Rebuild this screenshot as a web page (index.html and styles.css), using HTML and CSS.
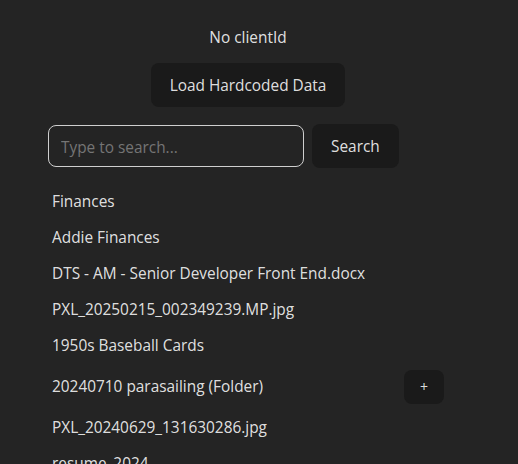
FILE: index.html
```html
<!DOCTYPE html>
<html lang="en">
<head>
<meta charset="utf-8">
<title>Files</title>
<link rel="stylesheet" href="styles.css">
</head>
<body>
<div class="app">
  <p class="status">No clientId</p>
  <div class="load-wrap"><button class="btn">Load Hardcoded Data</button></div>
  <div class="search-row">
    <input class="search-input" type="text" placeholder="Type to search...">
    <button class="btn">Search</button>
  </div>
  <ul class="file-list">
    <li class="file-row"><span>Finances</span></li>
    <li class="file-row"><span>Addie Finances</span></li>
    <li class="file-row"><span>DTS - AM - Senior Developer Front End.docx</span></li>
    <li class="file-row"><span>PXL_20250215_002349239.MP.jpg</span></li>
    <li class="file-row"><span>1950s Baseball Cards</span></li>
    <li class="file-row"><span>20240710 parasailing (Folder)</span><button class="btn btn-small">+</button></li>
    <li class="file-row"><span>PXL_20240629_131630286.jpg</span></li>
    <li class="file-row"><span>resume_2024</span></li>
  </ul>
</div>
</body>
</html>
```

FILE: styles.css
```css
html, body {
  margin: 0;
  background: #242424;
  color: rgba(255, 255, 255, 0.87);
  font-family: "Open Sans", "Noto Sans", sans-serif;
  font-size: 15.4px;
  line-height: 24px;
  overflow: hidden;
}

.app {
  width: 400px;
  margin-left: 48px;
  padding-top: 25px;
}

.status {
  margin: 0 0 14px;
  padding-top: 1px;
  height: 23px;
  text-align: center;
}

.load-wrap {
  display: flex;
  justify-content: center;
}

.btn {
  font-family: inherit;
  font-size: 15.4px;
  line-height: 24px;
  font-weight: 500;
  color: rgba(255, 255, 255, 0.87);
  background: #1a1a1a;
  border: 1px solid transparent;
  border-radius: 8px;
  padding: 10px 18px 8px;
  cursor: pointer;
}

.search-row {
  display: flex;
  align-items: center;
  gap: 8px;
  margin-top: 17px;
}

.search-input {
  width: 256px;
  height: 42px;
  box-sizing: border-box;
  background: #242424;
  border: 1px solid #cfcfcf;
  border-radius: 8px;
  padding: 2px 12px 0;
  font-family: inherit;
  font-size: 15.4px;
  color: rgba(255, 255, 255, 0.87);
  outline: none;
}

.search-input::placeholder {
  color: #757575;
}

.file-list {
  list-style: none;
  margin: 15px 0 0;
  padding: 0;
}

.file-row {
  display: flex;
  align-items: center;
  justify-content: space-between;
  padding: 7px 4px 5px;
}

.btn-small {
  width: 40px;
  height: 34px;
  padding: 0;
  font-size: 14px;
  line-height: 1;
}
```
